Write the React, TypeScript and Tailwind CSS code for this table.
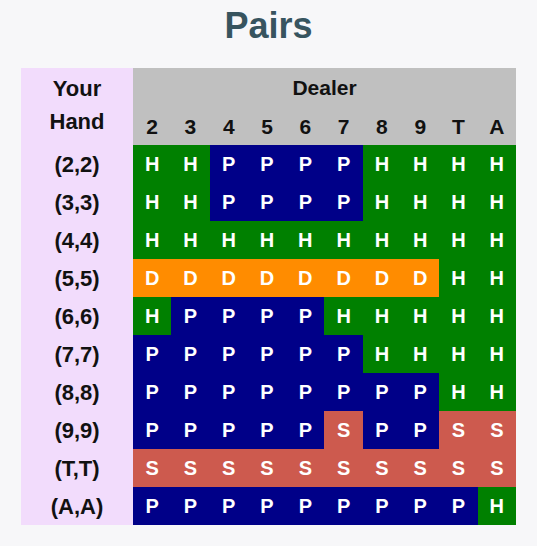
import React from 'react';

// Basic strategy for pairs: one row per hand, one letter per dealer card
const dealerCards = ['2', '3', '4', '5', '6', '7', '8', '9', 'T', 'A'];

const rows: { hand: string; moves: string }[] = [
    { hand: '(2,2)', moves: 'HHPPPPHHHH' },
    { hand: '(3,3)', moves: 'HHPPPPHHHH' },
    { hand: '(4,4)', moves: 'HHHHHHHHHH' },
    { hand: '(5,5)', moves: 'DDDDDDDDHH' },
    { hand: '(6,6)', moves: 'HPPPPHHHHH' },
    { hand: '(7,7)', moves: 'PPPPPPHHHH' },
    { hand: '(8,8)', moves: 'PPPPPPPPHH' },
    { hand: '(9,9)', moves: 'PPPPPSPPSS' },
    { hand: '(T,T)', moves: 'SSSSSSSSSS' },
    { hand: '(A,A)', moves: 'PPPPPPPPPH' },
];

// Cell colour per move
const moveColor: Record<string, string> = {
    H: 'bg-[#008000]',
    P: 'bg-[#000088]',
    D: 'bg-[#ff8c00]',
    S: 'bg-[#cd5a4e]',
};

export default function App() {
    return (
        <div className="w-[537px] h-[546px] bg-[#f7f7f9] font-['Liberation_Sans',Arial,sans-serif] pt-[5px]">
            <h1 className="text-center text-[36px] leading-[41px] font-bold text-[#37545f]">Pairs</h1>

            <div className="mt-[22px] ml-[21px] grid grid-cols-[112px_repeat(10,38.3px)] grid-rows-[39px_38px_repeat(10,38px)]">
                {/* Header */}
                <div className="row-span-2 bg-[#f2dcfc] flex flex-col items-center justify-center pb-[4px] text-[22px] leading-[33px] font-bold text-[#111]">
                    <span>Your</span>
                    <span>Hand</span>
                </div>
                <div className="col-span-10 bg-[#c0c0c0] flex items-center justify-center text-[21px] font-bold text-[#111]">
                    Dealer
                </div>
                {dealerCards.map((card) => (
                    <div key={card} className="bg-[#c0c0c0] flex items-center justify-center text-[21px] font-bold text-[#111] pt-[2px]">
                        {card}
                    </div>
                ))}

                {/* Body */}
                {rows.map((row) => (
                    <React.Fragment key={row.hand}>
                        <div className="bg-[#f2dcfc] flex items-center justify-center text-[22px] font-bold text-[#111]">
                            {row.hand}
                        </div>
                        {row.moves.split('').map((move, i) => (
                            <div
                                key={i}
                                className={`${moveColor[move]} flex items-center justify-center text-[20px] font-bold text-white`}
                            >
                                {move}
                            </div>
                        ))}
                    </React.Fragment>
                ))}
            </div>
        </div>
    );
}
